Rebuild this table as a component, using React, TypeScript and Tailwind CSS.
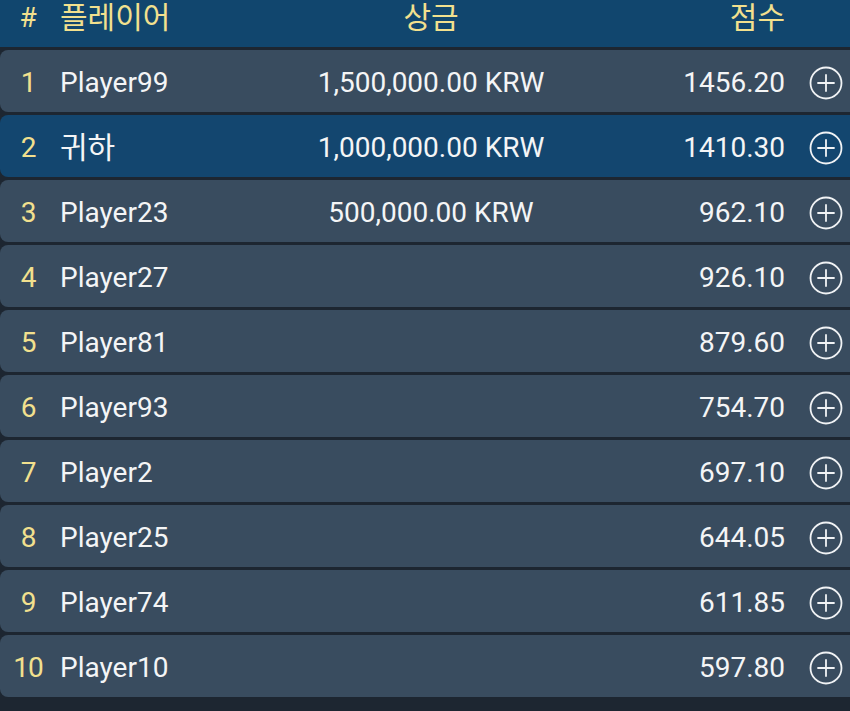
import React from "react";

interface Row {
  rank: number;
  name: string;
  prize?: string;
  score: string;
  me?: boolean;
}

const rows: Row[] = [
  { rank: 1, name: "Player99", prize: "1,500,000.00 KRW", score: "1456.20" },
  { rank: 2, name: "귀하", prize: "1,000,000.00 KRW", score: "1410.30", me: true },
  { rank: 3, name: "Player23", prize: "500,000.00 KRW", score: "962.10" },
  { rank: 4, name: "Player27", score: "926.10" },
  { rank: 5, name: "Player81", score: "879.60" },
  { rank: 6, name: "Player93", score: "754.70" },
  { rank: 7, name: "Player2", score: "697.10" },
  { rank: 8, name: "Player25", score: "644.05" },
  { rank: 9, name: "Player74", score: "611.85" },
  { rank: 10, name: "Player10", score: "597.80" },
];

const PlusCircle = () => (
  <svg width="34" height="34" viewBox="0 0 34 34" fill="none" stroke="#f1f3f5" strokeWidth="1.8">
    <circle cx="17" cy="17" r="15.5" />
    <path d="M17 9v16M9 17h16" strokeLinecap="round" />
  </svg>
);

const App = () => {
  return (
    <div
      className="w-[850px] h-[711px] bg-[#1d2631] overflow-hidden flex flex-col gap-[3px] text-[28px] leading-none"
      style={{ fontFamily: "Roboto, 'Noto Sans CJK KR', sans-serif" }}
    >
      <div className="h-[47px] shrink-0 bg-[#11466e] flex items-start pt-[3px] text-[30px] text-[#f2e08e]">
        <div className="w-[56px] text-center text-[28px] pt-[1px]">#</div>
        <div className="w-[204px] pl-[4px]">플레이어</div>
        <div className="w-[342px] text-center">상금</div>
        <div className="w-[183px] text-right">점수</div>
      </div>
      {rows.map((r) => (
        <div
          key={r.rank}
          className={`h-[62px] shrink-0 rounded-l-[8px] flex items-center pt-[3px] ${r.me ? "bg-[#13466f]" : "bg-[#394c5f]"}`}
        >
          <div className="w-[56px] text-center text-[#f2e08e] tracking-[-1px]">{r.rank}</div>
          <div className={`w-[204px] pl-[4px] text-[#f4f5f6] ${r.me ? "text-[30px]" : ""}`}>{r.name}</div>
          <div className="w-[342px] text-center text-[#f4f5f6]">{r.prize ?? ""}</div>
          <div className="w-[183px] text-right text-[#f4f5f6]">{r.score}</div>
          <div className="ml-[24px] flex items-center">
            <PlusCircle />
          </div>
        </div>
      ))}
    </div>
  );
};

export default App;
